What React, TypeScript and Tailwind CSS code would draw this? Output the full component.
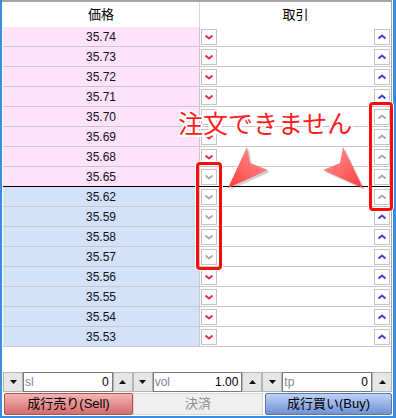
import React from "react";

type Row = { price: string; buy: boolean; downOff: boolean; upOff: boolean };

const prices = [
  "35.74", "35.73", "35.72", "35.71", "35.70", "35.69", "35.68", "35.65",
  "35.62", "35.59", "35.58", "35.57", "35.56", "35.55", "35.54", "35.53",
];

const rows: Row[] = prices.map((price, i) => ({
  price,
  buy: i >= 8,
  downOff: i >= 7 && i <= 11,
  upOff: i >= 4 && i <= 8,
}));

const Chevron = ({ up, color }: { up?: boolean; color: string }) => (
  <svg width="14" height="14" viewBox="0 0 14 14">
    <polyline
      points={up ? "3.5,8.5 7,5.5 10.5,8.5" : "3.5,5.5 7,8.5 10.5,5.5"}
      fill="none"
      stroke={color}
      strokeWidth="1.8"
    />
  </svg>
);

const TradeButton = ({ up, off }: { up?: boolean; off: boolean }) => (
  <div className="flex h-[16px] w-[16px] items-center justify-center border border-[#c4c4c4] bg-white">
    <Chevron up={up} color={off ? "#a8a8a8" : up ? "#3d3de0" : "#e8283a"} />
  </div>
);

const Tri = ({ up }: { up?: boolean }) => (
  <svg width="7" height="4" viewBox="0 0 7 4">
    <polygon points={up ? "0,4 7,4 3.5,0" : "0,0 7,0 3.5,4"} fill="#111" />
  </svg>
);

const Spinner = ({ label, value }: { label: string; value: string }) => (
  <div className="flex h-[20px] w-[130px]">
    <div className="flex w-[20px] items-center justify-center border border-[#b4b4b4] bg-[#e6e6e6]">
      <Tri />
    </div>
    <div className="flex flex-1 items-center justify-between border border-[#7a7a7a] bg-white pl-[1px] pr-[3px] text-[12px]">
      <span className="text-[#7b86a6]">{label}</span>
      <span className="text-black">{value}</span>
    </div>
    <div className="flex w-[20px] items-center justify-center border border-[#b4b4b4] bg-[#e6e6e6]">
      <Tri up />
    </div>
  </div>
);

const App = () => {
  return (
    <div
      className="relative h-[418px] w-[396px] overflow-hidden bg-white"
      style={{ fontFamily: '"Liberation Sans", "Noto Sans CJK JP", sans-serif' }}
    >
      <div className="flex h-full w-full flex-col border-b-2 border-l-2 border-r-[3px] border-[#3b8de2] bg-white">
        {/* List */}
        <div className="flex h-[372px] w-[390px] flex-col border-r border-t-2 border-[#a4a4a4] pl-px">
          <div className="flex h-[25px] text-[13px] text-black">
            <div className="flex w-[197px] items-center justify-center border-r border-[#d8d8d8]">
              価格
            </div>
            <div className="flex flex-1 items-center justify-center">取引</div>
          </div>
          {rows.map((r, i) => (
            <div
              key={r.price}
              className={`flex h-[20px] border-b ${
                i === 7 ? "border-black" : "border-[#c8c8c8]"
              }`}
            >
              <div
                className={`flex w-[197px] items-center justify-center border-r border-[#c8c8c8] text-[12px] text-[#101020] ${
                  r.buy ? "bg-[#d3e2f9]" : "bg-[#fde2fa]"
                }`}
              >
                {r.price}
              </div>
              <div className="flex flex-1 items-center justify-between px-px">
                <TradeButton off={r.downOff} />
                <TradeButton up off={r.upOff} />
              </div>
            </div>
          ))}
        </div>

        {/* Spinners */}
        <div className="flex px-px">
          <Spinner label="sl" value="0" />
          <Spinner label="vol" value="1.00" />
          <Spinner label="tp" value="0" />
        </div>

        {/* Order buttons */}
        <div className="mt-px flex h-[22px] text-[13px]">
          <button className="ml-[2px] w-[129px] rounded-[2px] border border-[#a85454] bg-gradient-to-b from-[#f8b4b4] to-[#d26c6c] text-black">
            成行売り(Sell)
          </button>
          <button className="w-[130px] border border-[#d6d6d6] bg-[#efefef] text-[#8e8e8e]">
            決済
          </button>
          <button className="ml-[2px] w-[127px] rounded-[2px] border border-[#5a74ae] bg-gradient-to-b from-[#bcd2f8] to-[#7191d2] text-black">
            成行買い(Buy)
          </button>
        </div>
      </div>

      {/* Callout overlay */}
      <div className="absolute left-[196px] top-[162px] h-[108px] w-[26px] rounded-[4px] border-[3px] border-[#ff0a0a] shadow-[0_0_0_1px_#fff]" />
      <div className="absolute left-[369px] top-[102px] h-[109px] w-[24px] rounded-[4px] border-[3px] border-[#ff0a0a] shadow-[0_0_0_1px_#fff]" />

      <svg className="pointer-events-none absolute left-0 top-0" width="396" height="418">
        <defs>
          <linearGradient id="al" x1="1" y1="0" x2="0" y2="1">
            <stop offset="0" stopColor="#ff9a9a" />
            <stop offset="1" stopColor="#ff3c3c" />
          </linearGradient>
          <linearGradient id="ar" x1="0" y1="0" x2="1" y2="1">
            <stop offset="0" stopColor="#ff9a9a" />
            <stop offset="1" stopColor="#ff3c3c" />
          </linearGradient>
        </defs>
        <polygon points="230,190 249,149 252,165 270,172" fill="#000" opacity="0.18" />
        <polygon points="228,188 247,147 250,163 268,170" fill="url(#al)" />
        <polygon points="365,190 345,149 342,165 325,172" fill="#000" opacity="0.18" />
        <polygon points="363,188 343,147 340,163 323,170" fill="url(#ar)" />
      </svg>

      <div
        className="absolute left-[178px] top-[110px] text-[25px] leading-none text-[#ff1c1c] [text-shadow:-2px_0_0_#fff,2px_0_0_#fff,0_-2px_0_#fff,0_2px_0_#fff,-1.5px_-1.5px_0_#fff,1.5px_1.5px_0_#fff,-1.5px_1.5px_0_#fff,1.5px_-1.5px_0_#fff]"
        style={{ fontFamily: '"Noto Sans CJK JP", sans-serif' }}
      >
        注文できません
      </div>
    </div>
  );
};

export default App;
